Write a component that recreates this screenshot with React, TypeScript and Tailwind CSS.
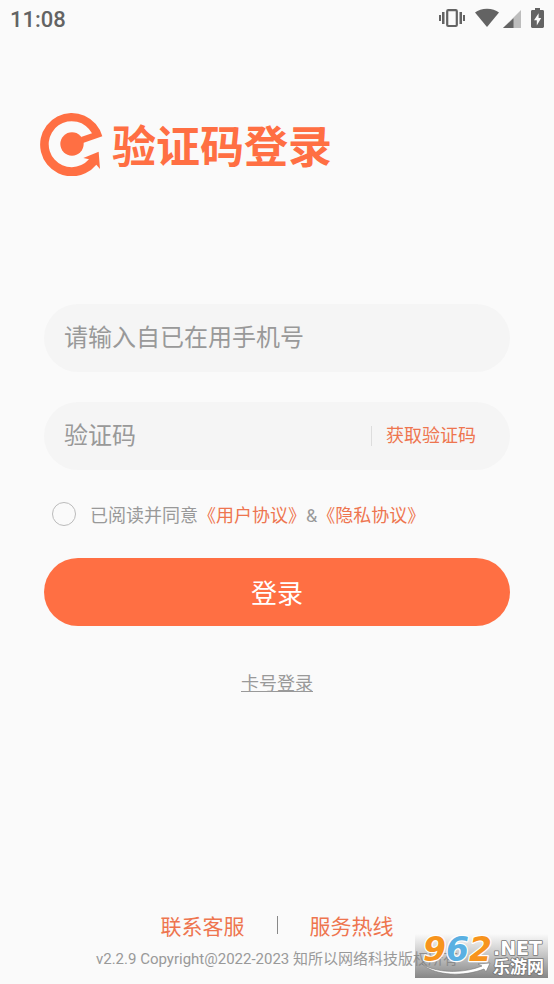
import { useState } from 'react'
import type { FormEvent } from 'react'

function StatusBar() {
   return (
      <header className="flex h-10 items-center justify-between px-2.5 text-[#636363]">
         <time className="text-[22px] leading-6 font-medium">11:08</time>
         <div className="flex items-center pb-1">
            <svg className="h-5 w-[26px]" viewBox="0 0 26 20" fill="currentColor">
               <rect x="0" y="7" width="2" height="6" />
               <rect x="3" y="4" width="2.5" height="12" />
               <rect x="20.5" y="4" width="2.5" height="12" />
               <rect x="24" y="7" width="2" height="6" />
               <rect
                  x="8.2"
                  y="2.2"
                  width="9.6"
                  height="15.8"
                  rx="1"
                  fill="none"
                  stroke="currentColor"
                  strokeWidth="2.2"
               />
            </svg>
            <svg className="ml-2.5 h-5 w-6" viewBox="0 0 24 20" fill="currentColor">
               <path d="M0 4.6C3 2.1 7.2.8 12 .8s9 1.3 12 3.8L12 19z" />
            </svg>
            <svg className="ml-1 h-5 w-[18px]" viewBox="0 0 18 20" fill="currentColor">
               <path d="M18 2v18H0z" className="text-[#bdbdbd]" />
               <path d="M10.500 10.300V20H0z" />
            </svg>
            <svg className="ml-2.5 h-5 w-[13px]" viewBox="0 0 13 20">
               <path
                  d="M4 0h5v2h2.6c.8 0 1.4.6 1.4 1.400v15.200c0 .8-.6 1.400-1.400 1.400H1.400C.6 20 0 19.400 0 18.600V3.400C0 2.600.6 2 1.400 2H4z"
                  fill="currentColor"
               />
               <path d="M7.600 5.200L3 12.200h2.800v5.200L10.200 10H7.600z" fill="#fafafa" />
            </svg>
         </div>
      </header>
   )
}

function Logo() {
   return (
      <svg className="size-16 shrink-0" viewBox="17 19 192 192" fill="#ff6f43">
         <path d="M204 92A95 95 0 1 0 186 177L197 190L193 138L147 157L164 161A69 69 0 1 1 173 83L140 94L146 112Z" />
         <circle cx="113" cy="115" r="35" />
      </svg>
   )
}

function SiteBadge() {
   return (
      <svg
         className="absolute right-1.5 bottom-1.5 h-14 w-[133px]"
         viewBox="0 -12 133 56"
         role="img"
         aria-label="962.NET 乐游网"
      >
         <defs>
            <linearGradient id="badge-bg" x1="0" y1="0" x2="0" y2="1">
               <stop offset="0" stopColor="#808080" stopOpacity="0" />
               <stop offset="0.5" stopColor="#808080" stopOpacity="0.45" />
               <stop offset="1" stopColor="#808080" stopOpacity="0.95" />
            </linearGradient>
         </defs>
         <rect width="133" height="44" fill="url(#badge-bg)" />
         <path
            d="M7 30c14 9 40 10 60 2l-4-2 12-1-4 9-2-3C49 43 20 42 7 30z"
            fill="#fff"
            stroke="#777"
            strokeWidth="0.6"
         />
         <g
            fontFamily="'DejaVu Sans', sans-serif"
            fontWeight="700"
            strokeLinejoin="round"
            paintOrder="stroke"
         >
            <text
               x="8"
               y="27"
               fontSize="33"
               fontStyle="italic"
               stroke="#fff"
               strokeWidth="2.4"
               fill="#f7941d"
            >
               9<tspan fill="#5ab0e2">6</tspan>2
            </text>
            <text x="78" y="21" fontSize="19" fill="#fff" stroke="#777" strokeWidth="1.6">
               .NET
            </text>
         </g>
         <text
            x="78"
            y="39"
            fontSize="17"
            fontWeight="700"
            fontFamily="'Noto Sans CJK SC', sans-serif"
            fill="#fff"
            stroke="#777"
            strokeWidth="1.6"
            paintOrder="stroke"
         >
            乐游网
         </text>
      </svg>
   )
}

function App() {
   const [phone, setPhone] = useState('')
   const [code, setCode] = useState('')
   const [agreed, setAgreed] = useState(false)

   const handleSubmit = (e: FormEvent) => {
      e.preventDefault()
   }

   return (
      <div className="relative flex min-h-screen flex-col bg-[#fafafa] font-[Roboto,'Noto_Sans_CJK_SC',sans-serif] text-[#999]">
         <StatusBar />

         <main className="flex flex-col">
            <div className="mt-[72px] flex items-center gap-2 px-10">
               <Logo />
               <h1 className="pt-2 text-[44px] leading-14 font-bold text-[#ff6f43]">验证码登录</h1>
            </div>

            <form onSubmit={handleSubmit} className="mt-32 flex flex-col px-11">
               <input
                  type="tel"
                  aria-label="手机号"
                  placeholder="请输入自已在用手机号"
                  value={phone}
                  onChange={(e) => setPhone(e.target.value)}
                  className="h-[68px] rounded-full bg-[#f5f5f5] px-5 text-2xl outline-none placeholder:text-[#999]"
               />

               <div className="mt-[30px] flex h-[68px] items-center rounded-full bg-[#f5f5f5] pr-[34px] pl-5">
                  <input
                     type="text"
                     aria-label="验证码"
                     placeholder="验证码"
                     value={code}
                     onChange={(e) => setCode(e.target.value)}
                     className="min-w-0 flex-1 text-2xl outline-none placeholder:text-[#999]"
                  />
                  <button
                     type="button"
                     className="border-l border-[#ddd] pl-3.5 text-lg leading-5 text-[#ee754f]"
                  >
                     获取验证码
                  </button>
               </div>

               <div className="mt-8 flex h-6 items-center pl-2 text-lg leading-6">
                  <input
                     id="agree"
                     type="checkbox"
                     checked={agreed}
                     onChange={(e) => setAgreed(e.target.checked)}
                     className="mr-3.5 size-6 shrink-0 appearance-none rounded-full border border-[#bbb] checked:bg-[#ff6f43]"
                  />
                  <div className="flex pt-1">
                     <label htmlFor="agree">已阅读并同意</label>
                     <a href="#terms" className="text-[#ee754f]">
                        《用户协议》
                     </a>
                     <span>&amp;</span>
                     <a href="#privacy" className="text-[#ee754f]">
                        《隐私协议》
                     </a>
                  </div>
               </div>

               <button
                  type="submit"
                  className="mt-8 h-[68px] rounded-full bg-[#ff6f43] pt-1 text-[26px] text-white"
               >
                  登录
               </button>
            </form>

            <a href="#card" className="mt-[46px] self-center text-lg leading-6 underline">
               卡号登录
            </a>
         </main>

         <footer className="mt-auto flex flex-col items-center pb-[13px]">
            <nav className="flex items-center text-[21px] leading-8 text-[#ee754f]">
               <a href="#service">联系客服</a>
               <span className="mx-8 mb-1 h-[18px] w-px bg-[#888]" />
               <a href="#hotline">服务热线</a>
            </nav>
            <p className="mt-1 text-[15px] leading-6">
               v2.2.9 Copyright@2022-2023 知所以网络科技版权所有
            </p>
         </footer>

         <SiteBadge />
      </div>
   )
}

export default App
